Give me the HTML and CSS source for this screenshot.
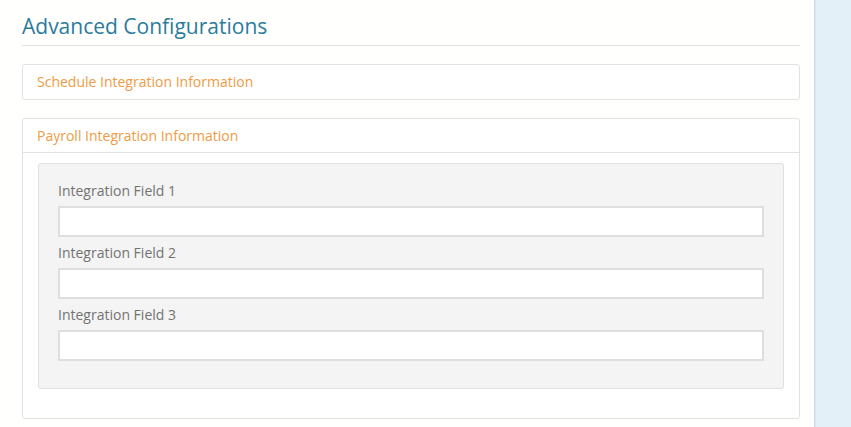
FILE: index.html
```html
<!DOCTYPE html>
<html>
<head>
<meta charset="utf-8">
<link rel="stylesheet" href="styles.css">
</head>
<body>
<div class="layout">
  <main class="main">
    <h2 class="title">Advanced Configurations</h2>
    <section class="panel">
      <div class="panel-heading">Schedule Integration Information</div>
    </section>
    <section class="panel">
      <div class="panel-heading bordered">Payroll Integration Information</div>
      <div class="panel-body">
        <div class="well">
          <div class="field">
            <label>Integration Field 1</label>
            <input type="text">
          </div>
          <div class="field">
            <label>Integration Field 2</label>
            <input type="text">
          </div>
          <div class="field">
            <label>Integration Field 3</label>
            <input type="text">
          </div>
        </div>
      </div>
    </section>
  </main>
  <aside class="side"></aside>
</div>
</body>
</html>
```
FILE: styles.css
```css
* { box-sizing: border-box; }
html, body { margin: 0; padding: 0; }
body {
  font-family: "Open Sans", "Segoe UI", sans-serif;
  background: #ffffff;
  width: 851px;
  height: 427px;
  overflow: hidden;
}
.layout {
  display: flex;
  height: 427px;
}
.main {
  width: 814px;
  padding: 0 14px 0 22px;
  background: #fffffe;
}
.side {
  flex: 1;
  background: #e4f0f8;
  border-left: 1px solid #d6dde2;
  box-shadow: inset 1px 0 0 #dde7ee;
}
.title {
  margin: 0 0 18px;
  padding: 13px 0 6px;
  font-size: 21px;
  font-weight: 400;
  line-height: 26px;
  color: #2b7b9b;
  border-bottom: 1px solid #e3e3e3;
}
.panel {
  border: 1px solid #e2e2e2;
  border-radius: 3px;
  margin-bottom: 18px;
  background: #fff;
}
.panel-heading {
  height: 34px;
  padding: 0 14px;
  font-size: 14px;
  line-height: 34px;
  color: #ef9b45;
}
.panel-heading.bordered {
  border-bottom: 1px solid #e2e2e2;
}
.panel-body {
  padding: 10px 15px 29px;
}
.well {
  background: #f4f4f4;
  border: 1px solid #e0e0e0;
  border-radius: 3px;
  padding: 17px 19px 27px;
}
.field + .field { margin-top: 6px; }
.field label {
  display: block;
  font-size: 14px;
  line-height: 20px;
  color: #737373;
  margin-bottom: 5px;
}
.field input {
  display: block;
  width: 100%;
  height: 31px;
  border: 2px solid #dedede;
  background: #fff;
  margin: 0;
  padding: 0 6px;
}
```
